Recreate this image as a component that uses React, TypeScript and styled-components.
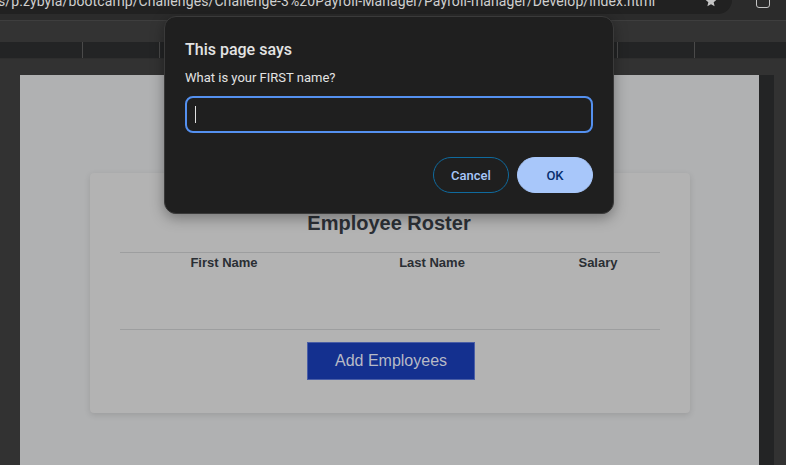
import React from "react";
import styled, { createGlobalStyle } from "styled-components";

const GlobalStyle = createGlobalStyle`
  html, body {
    margin: 0;
    padding: 0;
    background: #323232;
    width: 786px;
    height: 465px;
    overflow: hidden;
  }
`;

const Screen = styled.div`
  position: relative;
  width: 786px;
  height: 465px;
  display: flex;
  flex-direction: column;
  background: #323232;
`;

const TopBar = styled.div`
  height: 20px;
  display: flex;
  background: #2b2b2b;
  overflow: hidden;
`;

const Omnibox = styled.div`
  width: 732px;
  height: 14px;
  background: #212121;
  border-bottom-right-radius: 14px;
  display: flex;
  align-items: flex-end;
  overflow: hidden;
  position: relative;
`;

const Url = styled.span`
  font-family: Roboto, "Liberation Sans", sans-serif;
  font-size: 14px;
  line-height: 14px;
  letter-spacing: 0.1px;
  color: #d0d0d0;
  white-space: nowrap;
  margin-bottom: 6px;
  margin-left: -2px;
`;

const StarIcon = styled.svg`
  position: absolute;
  right: 14px;
  top: -6px;
`;

const TabIcon = styled.div`
  width: 12px;
  height: 14px;
  margin-left: 24px;
  margin-top: -8px;
  border: 1.5px solid #c4c4c4;
  border-radius: 3px;
`;

const Toolbar = styled.div`
  height: 21px;
  background: #333333;
  border-top: 1px solid #3e3e3e;
`;

const BookmarkBar = styled.div`
  height: 16px;
  display: grid;
  grid-template-columns: 83px 77px 458px 77px 1fr;
  background: #232425;
  border-bottom: 1px solid #2e2e2e;
`;

const BookmarkCell = styled.div`
  border-right: 1px solid #4a4a4a;
  &:last-child {
    border-right: none;
  }
`;

const Viewport = styled.div`
  flex: 1;
  display: flex;
  padding: 16px 0 0 20px;
`;

const Page = styled.div`
  width: 739px;
  background: #b0b1b2;
  display: flex;
  flex-direction: column;
  align-items: flex-start;
`;

const Scrollbar = styled.div`
  width: 15px;
  background: #232425;
`;

const Card = styled.div`
  margin: 98px 0 0 70px;
  width: 600px;
  height: 240px;
  box-sizing: border-box;
  padding: 38px 30px 0;
  background: #b3b3b3;
  border-radius: 4px;
  box-shadow: 0 2px 6px rgba(0, 0, 0, 0.12);
  display: flex;
  flex-direction: column;
  align-items: center;
  font-family: "Liberation Sans", Arial, sans-serif;
`;

const Title = styled.h1`
  margin: 0 0 0 -2px;
  font-size: 20px;
  line-height: 24px;
  font-weight: 700;
  color: #2c3036;
`;

const Rule = styled.div`
  align-self: stretch;
  height: 1px;
  background: #9d9e9f;
`;

const Table = styled.div`
  align-self: stretch;
  margin-top: 17px;
  display: flex;
  flex-direction: column;
`;

const HeaderRow = styled.div`
  display: grid;
  grid-template-columns: 208px 208px 1fr;
  height: 76px;
  padding-top: 2px;
  box-sizing: border-box;
`;

const HeaderCell = styled.div`
  text-align: center;
  font-size: 13px;
  line-height: 16px;
  font-weight: 700;
  color: #2a2e33;
`;

const AddButton = styled.button`
  margin: 12px 0 0 2px;
  width: 168px;
  height: 38px;
  background: #14308f;
  border: 1px solid #4a5ea6;
  color: #b7bac6;
  font-family: "Liberation Sans", Arial, sans-serif;
  font-size: 16px;
  padding: 0;
`;

const Dialog = styled.div`
  position: absolute;
  left: 164px;
  top: 16px;
  width: 450px;
  height: 198px;
  box-sizing: border-box;
  padding: 23px 20px 0 20px;
  background: #1f1f1f;
  border: 1px solid #3a3a3a;
  border-radius: 12px;
  box-shadow: 0 4px 14px rgba(0, 0, 0, 0.35);
  font-family: Roboto, "Liberation Sans", sans-serif;
  display: flex;
  flex-direction: column;
`;

const DialogTitle = styled.div`
  font-size: 16px;
  line-height: 20px;
  font-weight: 500;
  color: #e3e3e3;
`;

const DialogText = styled.div`
  margin-top: 10px;
  font-size: 13px;
  line-height: 16px;
  color: #e3e3e3;
`;

const InputBox = styled.div`
  margin-top: 10px;
  height: 37px;
  box-sizing: border-box;
  border: 2px solid #5490ef;
  border-radius: 8px;
  display: flex;
  align-items: center;
  padding-left: 8px;
`;

const Caret = styled.span`
  width: 1px;
  height: 17px;
  background: #e0e0e0;
`;

const Actions = styled.div`
  margin-top: 24px;
  display: flex;
  justify-content: flex-end;
  gap: 8px;
`;

const PillButton = styled.button<{ $primary?: boolean }>`
  width: 76px;
  height: 36px;
  border-radius: 18px;
  font-family: Roboto, "Liberation Sans", sans-serif;
  font-size: 13px;
  font-weight: 500;
  padding: 0;
  border: 1px solid ${({ $primary }) => ($primary ? "#a8c7fa" : "#0f6a9e")};
  background: ${({ $primary }) => ($primary ? "#a8c7fa" : "transparent")};
  color: ${({ $primary }) => ($primary ? "#062e6f" : "#a8c7fa")};
`;

export default function App() {
  return (
    <>
      <GlobalStyle />
      <Screen>
        <TopBar>
          <Omnibox>
            <Url>
              s/p.zybyla/bootcamp/Challenges/Challenge-3%20Payroll-Manager/Payroll-manager/Develop/index.html
            </Url>
            <StarIcon width="14" height="14" viewBox="0 0 24 24">
              <path
                d="M12 2l2.9 6.9 7.1.6-5.4 4.7 1.6 7-6.2-3.7-6.2 3.7 1.6-7L2 9.5l7.1-.6z"
                fill="#c4c4c4"
              />
            </StarIcon>
          </Omnibox>
          <TabIcon />
        </TopBar>
        <Toolbar />
        <BookmarkBar>
          <BookmarkCell />
          <BookmarkCell />
          <BookmarkCell />
          <BookmarkCell />
          <BookmarkCell />
        </BookmarkBar>
        <Viewport>
          <Page>
            <Card>
              <Title>Employee Roster</Title>
              <Table>
                <Rule />
                <HeaderRow>
                  <HeaderCell>First Name</HeaderCell>
                  <HeaderCell>Last Name</HeaderCell>
                  <HeaderCell>Salary</HeaderCell>
                </HeaderRow>
                <Rule />
              </Table>
              <AddButton>Add Employees</AddButton>
            </Card>
          </Page>
          <Scrollbar />
        </Viewport>
        <Dialog>
          <DialogTitle>This page says</DialogTitle>
          <DialogText>What is your FIRST name?</DialogText>
          <InputBox>
            <Caret />
          </InputBox>
          <Actions>
            <PillButton>Cancel</PillButton>
            <PillButton $primary>OK</PillButton>
          </Actions>
        </Dialog>
      </Screen>
    </>
  );
}
